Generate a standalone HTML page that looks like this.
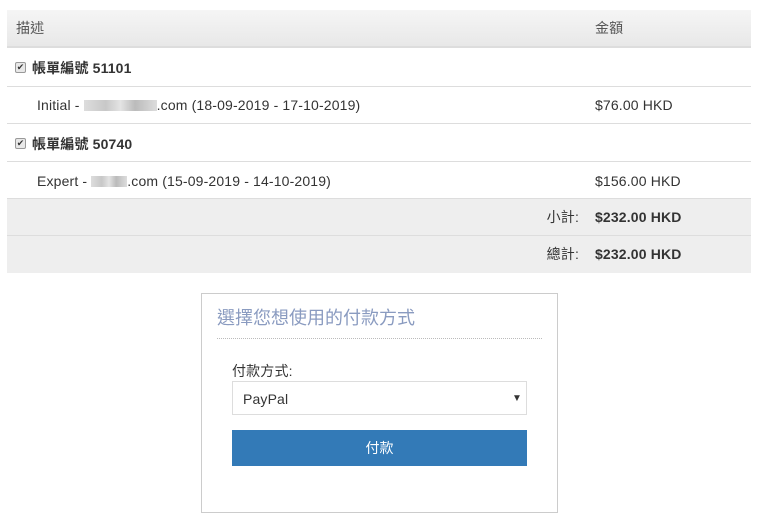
<!DOCTYPE html>
<html><head><meta charset="utf-8"><style>
*{margin:0;padding:0;box-sizing:border-box}
body{width:760px;height:523px;background:#fff;font-family:"Liberation Sans","Noto Sans CJK TC",sans-serif;font-size:14px;color:#333;position:relative;overflow:hidden}
.a{position:absolute}
.row{position:absolute;left:7px;width:744px;border-bottom:1px solid #ddd}
.t{position:absolute;line-height:16px;letter-spacing:0.15px}
.cb{position:absolute;width:11px;height:11px;border:1px solid #999;border-radius:2px;background:#e8e8e8;font-size:9px;line-height:9px;text-align:center;color:#333}
.blur{display:inline-block;height:11px;vertical-align:-1px;background:linear-gradient(90deg,#ddd,#c8c8c8 30%,#e4e4e4 50%,#bbb 70%,#ddd)}
</style></head><body>
<div class="row" style="top:10px;height:38px;background:linear-gradient(#f5f5f5,#e8e8e8);border-bottom:2px solid #ddd"></div>
<div class="t" style="left:16px;top:20px;color:#555">描述</div>
<div class="t" style="left:595px;top:20px;color:#555">金額</div>
<div class="row" style="top:48px;height:39px"></div>
<div class="cb" style="left:15px;top:62px">✔</div>
<div class="t" style="left:32px;top:60px;font-weight:bold">帳單編號 51101</div>
<div class="row" style="top:87px;height:37px"></div>
<div class="t" style="left:37px;top:97px">Initial - <span class="blur" style="width:73px"></span>.com (18-09-2019 - 17-10-2019)</div>
<div class="t" style="left:595px;top:97px">$76.00 HKD</div>
<div class="row" style="top:124px;height:38px"></div>
<div class="cb" style="left:15px;top:138px">✔</div>
<div class="t" style="left:32px;top:136px;font-weight:bold">帳單編號 50740</div>
<div class="row" style="top:162px;height:37px"></div>
<div class="t" style="left:37px;top:173px">Expert - <span class="blur" style="width:36px"></span>.com (15-09-2019 - 14-10-2019)</div>
<div class="t" style="left:595px;top:173px">$156.00 HKD</div>
<div class="row" style="top:199px;height:37px;background:#eee"></div>
<div class="t" style="left:500px;width:79px;text-align:right;top:209px">小計:</div>
<div class="t" style="left:595px;top:209px;font-weight:bold">$232.00 HKD</div>
<div class="row" style="top:236px;height:37px;background:#eee;border:none"></div>
<div class="t" style="left:500px;width:79px;text-align:right;top:246px">總計:</div>
<div class="t" style="left:595px;top:246px;font-weight:bold">$232.00 HKD</div>
<div class="a" style="left:201px;top:293px;width:357px;height:220px;border:1px solid #ccc"></div>
<div class="t" style="left:217px;top:308px;font-size:18px;line-height:20px;color:#8a9bc0;letter-spacing:0">選擇您想使用的付款方式</div>
<div class="a" style="left:217px;top:338px;width:325px;border-top:1px dotted #bbb"></div>
<div class="t" style="left:232px;top:363px">付款方式:</div>
<div class="a" style="left:232px;top:381px;width:295px;height:34px;border:1px solid #ddd"></div>
<div class="t" style="left:243px;top:391px">PayPal</div>
<div class="t" style="left:512px;top:391px;font-size:10px">▼</div>
<div class="a" style="left:232px;top:430px;width:295px;height:36px;background:#337ab7;color:#fff;text-align:center;line-height:36px">付款</div>
</body></html>
